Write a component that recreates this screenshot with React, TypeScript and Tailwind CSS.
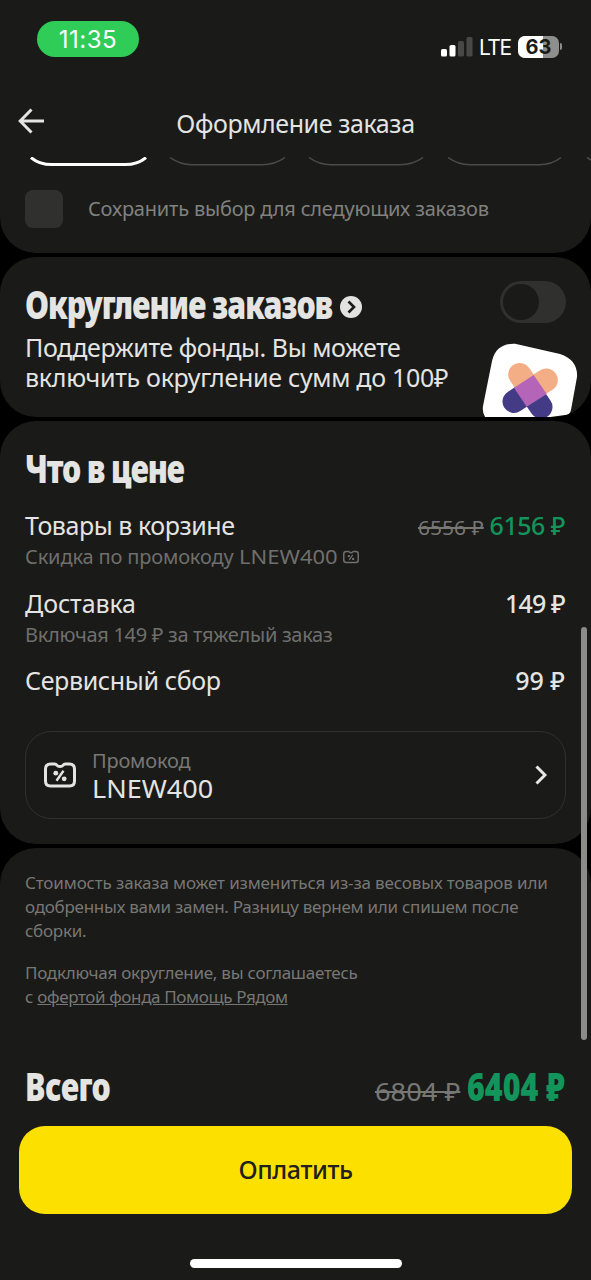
import type { ReactNode } from "react";

const CARD = "w-full shrink-0 bg-[#1a1a18]";

const StatusBar = () => (
    <div className="flex h-[76px] items-start justify-between pl-[37px] pr-[29px]">
        <div className="mt-[21px] flex h-9 w-[102px] items-center justify-center rounded-full bg-[#30cc58] pt-px font-['Inter'] text-[24px] leading-none tracking-[0.5px] text-white">
            11:35
        </div>
        <div className="mt-[35px] flex h-[23px] items-center">
            <svg width="32" height="20" viewBox="0 0 32 20" className="mr-[6px]">
                <rect x="0" y="12" width="6" height="7.5" rx="1.6" fill="#fff" />
                <rect x="8.5" y="8" width="6" height="11.5" rx="1.6" fill="#fff" />
                <rect x="17" y="4" width="6" height="15.5" rx="1.6" fill="#484846" />
                <rect x="25.5" y="0" width="6" height="19.5" rx="1.6" fill="#484846" />
            </svg>
            <span className="mt-[2px] w-[39px] font-['Inter'] text-[21px] leading-none tracking-[-1.5px] text-white">LTE</span>
            <div className="relative flex h-[22px] w-[41px] items-center justify-center overflow-hidden rounded-[7px] bg-[#8e8e8c]">
                <div className="absolute inset-y-0 left-0 w-[25px] bg-white" />
                <span className="relative font-['Inter'] text-[20px] font-bold leading-none text-[#1a1a18]">63</span>
            </div>
            <div className="ml-px h-[7px] w-[2px] rounded-r-full bg-[#8e8e8c]" />
        </div>
    </div>
);

const Header = () => (
    <div className="relative flex h-[81px] items-start justify-center pt-[32px]">
        <svg width="26" height="26" viewBox="0 0 26 26" className="absolute left-[18px] top-[32px]" fill="none" stroke="#e4e4e2" strokeWidth="3">
            <path d="M26 13H2.500M13.500 1.500L2.200 13l11.300 11.500" />
        </svg>
        <h1 className="text-[25px] leading-[30px] tracking-[-0.4px]">Оформление заказа</h1>
    </div>
);

const PaymentOptions = () => (
    <div className={`${CARD} h-24 overflow-hidden rounded-b-[36px]`}>
        <svg width="591" height="10" viewBox="0 0 591 10" fill="none" className="block">
            <path d="M31 .5Q39 7.500 52 7.500H125Q138 7.500 146 .5" stroke="#fff" strokeWidth="3" />
            <path
                d="M170 .5Q180 7.800 192 7.800H262Q275 7.800 285 .5M309 .5Q319 7.800 331 7.800H400Q413 7.800 423 .5M448 .5Q458 7.800 470 7.800H539Q552 7.800 561 .5M587 .5L591 3"
                stroke="#4b4b49"
                strokeWidth="1.5"
            />
        </svg>
        <div className="mt-[23px] flex items-center pl-[25px]">
            <div className="size-[38px] rounded-lg bg-[#30302f]" />
            <span className="ml-[25px] text-[20px] leading-[26px] tracking-[-0.2px] text-[#81817f]">
                Сохранить выбор для следующих заказов
            </span>
        </div>
    </div>
);

const Title = ({ children, className }: { children: ReactNode; className?: string }) => (
    <h2 className={`whitespace-nowrap text-[39px] font-black leading-10 ${className ?? ""}`}>
        <span className="inline-block origin-left scale-x-78">{children}</span>
    </h2>
);

const RoundingCard = () => (
    <div className={`${CARD} relative h-[160px] overflow-hidden rounded-[36px] pl-[25px] pt-[27px]`}>
        <div className="flex h-10 items-center">
            <Title className="w-[307px] tracking-[-1.35px]">Округление заказов</Title>
            <svg width="22" height="22" viewBox="0 0 22 22" className="ml-2 mt-[5px]" fill="none">
                <circle cx="11" cy="11" r="11" fill="#e2e2e0" />
                <path d="M8.500 5.500l5.500 5.500-5.500 5.500" stroke="#1a1a18" strokeWidth="2.600" />
            </svg>
        </div>
        <p className="mt-2 text-[25px] leading-[30px] tracking-[-0.42px]">
            Поддержите фонды. Вы можете
            <br />
            <span className="tracking-[-0.3px]">включить округление сумм до 100₽</span>
        </p>
        <div className="absolute right-[25px] top-[24px] h-[42px] w-[66px] rounded-full bg-[#30302f] p-[3px]">
            <div className="size-9 rounded-full bg-[#1a1a18]" />
        </div>
        <svg width="98" height="74" viewBox="0 0 98 74" className="absolute bottom-0 left-[481px]">
            <path d="M5 75Q1 71 2 63L11 18Q15 0 34 .8L79 11Q97 17 96 34L90 67Q89 72 84 72L62 75Z" fill="#fff" />
            <g strokeWidth="23" strokeLinecap="round">
                <path d="M60 64L49 48M33 58.500L49 48" stroke="#433b86" />
                <path d="M38.700 31.500L46 42M65.300 37L56 43" stroke="#f3ae86" />
            </g>
            <path d="M52.700 32L65.700 51 45.700 63.700 33 44.700Z" fill="#b565b8" />
        </svg>
    </div>
);

const CouponIcon = ({ className }: { className?: string }) => (
    <svg viewBox="0 0 32 26" className={className} fill="none" stroke="currentColor" strokeWidth="3" strokeLinejoin="round">
        <path d="M6.500 2h4.300q1.200 0 2 1.100 1.200 1.500 3.200 1.500t3.200-1.500Q20 2 21.200 2h4.300Q30.500 2 30.500 7v12q0 5-5 5h-19q-5 0-5-5V7q0-5 5-5Z" />
        <path d="M19.500 8.800l-7 10" strokeWidth="2.400" />
        <circle cx="11.800" cy="11.200" r="2.400" fill="currentColor" stroke="none" />
        <circle cx="20.200" cy="16.800" r="2.400" fill="currentColor" stroke="none" />
    </svg>
);

const PriceCard = () => (
    <div className={`${CARD} h-[423px] rounded-[36px] px-[25px] pt-[27px]`}>
        <Title className="tracking-[-1.5px]">Что в цене</Title>
        <div className="mt-[22px] flex items-baseline justify-between text-[25px] leading-[30px]">
            <span className="tracking-[-0.45px]">Товары в корзине</span>
            <span className="flex items-baseline pr-px">
                <s className="mr-[5px] w-[67px] origin-left scale-x-[1.05] text-[20px] leading-none text-[#777775]">6556 ₽</s>
                <span className="font-medium tracking-[-0.5px] text-[#12945b]">6156 ₽</span>
            </span>
        </div>
        <div className="mt-1 flex items-center text-[20px] leading-[26px] tracking-[-0.15px] text-[#6f6f6d]">
            Скидка по промокоду
            <span className="ml-[5px] w-[99px] origin-left scale-x-110 tracking-normal">LNEW400</span>
            <CouponIcon className="ml-[5px] h-[14px] w-4" />
        </div>
        <div className="mt-[18px] flex items-baseline justify-between text-[25px] leading-[30px]">
            <span className="tracking-[-0.1px]">Доставка</span>
            <span className="pr-px font-medium tracking-[-0.8px]">149 ₽</span>
        </div>
        <div className="mt-1 text-[20px] leading-[26px] tracking-[-0.3px] text-[#6f6f6d]">Включая 149 ₽ за тяжелый заказ</div>
        <div className="mt-[17px] flex items-baseline justify-between text-[25px] leading-[30px]">
            <span className="tracking-[-0.35px]">Сервисный сбор</span>
            <span className="pr-px font-medium">99 ₽</span>
        </div>
        <div className="mt-9 flex h-[88px] items-center rounded-[26px] border border-[#30302f] px-[18px]">
            <CouponIcon className="h-[26px] w-8" />
            <div className="-mt-px ml-4 flex-1">
                <div className="text-[20px] leading-[26px] tracking-[-0.2px] text-[#777775]">Промокод</div>
                <div className="text-[25px] leading-7">
                    <span className="inline-block origin-left scale-x-108">LNEW400</span>
                </div>
            </div>
            <svg width="12" height="20" viewBox="0 0 12 20" fill="none" stroke="#e8e8e6" strokeWidth="3">
                <path d="M1.500 1.500L10 10l-8.500 8.500" />
            </svg>
        </div>
    </div>
);

const CheckoutFooter = () => (
    <div className={`${CARD} h-[432px] rounded-t-[36px]`}>
        <div className="h-[218px] px-[25px] pt-[23px] text-[17px] leading-6 tracking-[-0.26px] text-[#777775]">
            <p>
                <span className="tracking-[-0.14px]">Стоимость заказа может измениться из-за весовых товаров или</span>
                <br />
                одобренных вами замен. Разницу вернем или спишем после
                <br />
                сборки.
            </p>
            <p className="mt-[18px]">
                Подключая округление, вы соглашаетесь
                <br />с <span className="tracking-[-0.38px] underline">офертой фонда Помощь Рядом</span>
            </p>
        </div>
        <div className="flex h-10 items-baseline justify-between px-[25px]">
            <Title className="tracking-[-0.6px]">Всего</Title>
            <div className="flex items-baseline">
                <s className="mr-[6px] w-[86px] origin-left scale-x-[1.09] text-[25px] leading-none text-[#777775]">6804 ₽</s>
                <div className="text-[#12945b]">
                    <Title className="w-[99px]">6404 ₽</Title>
                </div>
            </div>
        </div>
        <button className="mx-[19px] mt-5 flex h-[88px] w-[553px] items-center justify-center rounded-[26px] bg-[#fce000] text-[25px] font-medium tracking-[-0.4px] text-[#21201f]">
            Оплатить
        </button>
        <div className="mx-auto mt-[45px] h-[9px] w-[212px] rounded-full bg-white" />
    </div>
);

const App = () => (
    <div className="relative flex h-[1280px] w-[591px] flex-col gap-1 overflow-hidden whitespace-nowrap bg-black font-['Noto_Sans',sans-serif] text-[#e4e4e2]">
        <div>
            <div className="bg-[#1a1a18]">
                <StatusBar />
                <Header />
            </div>
            <PaymentOptions />
        </div>
        <RoundingCard />
        <PriceCard />
        <CheckoutFooter />
        <div className="absolute right-[4px] top-[627px] h-[413px] w-[6px] rounded-full bg-[#8b8b89]" />
    </div>
);

export default App;
